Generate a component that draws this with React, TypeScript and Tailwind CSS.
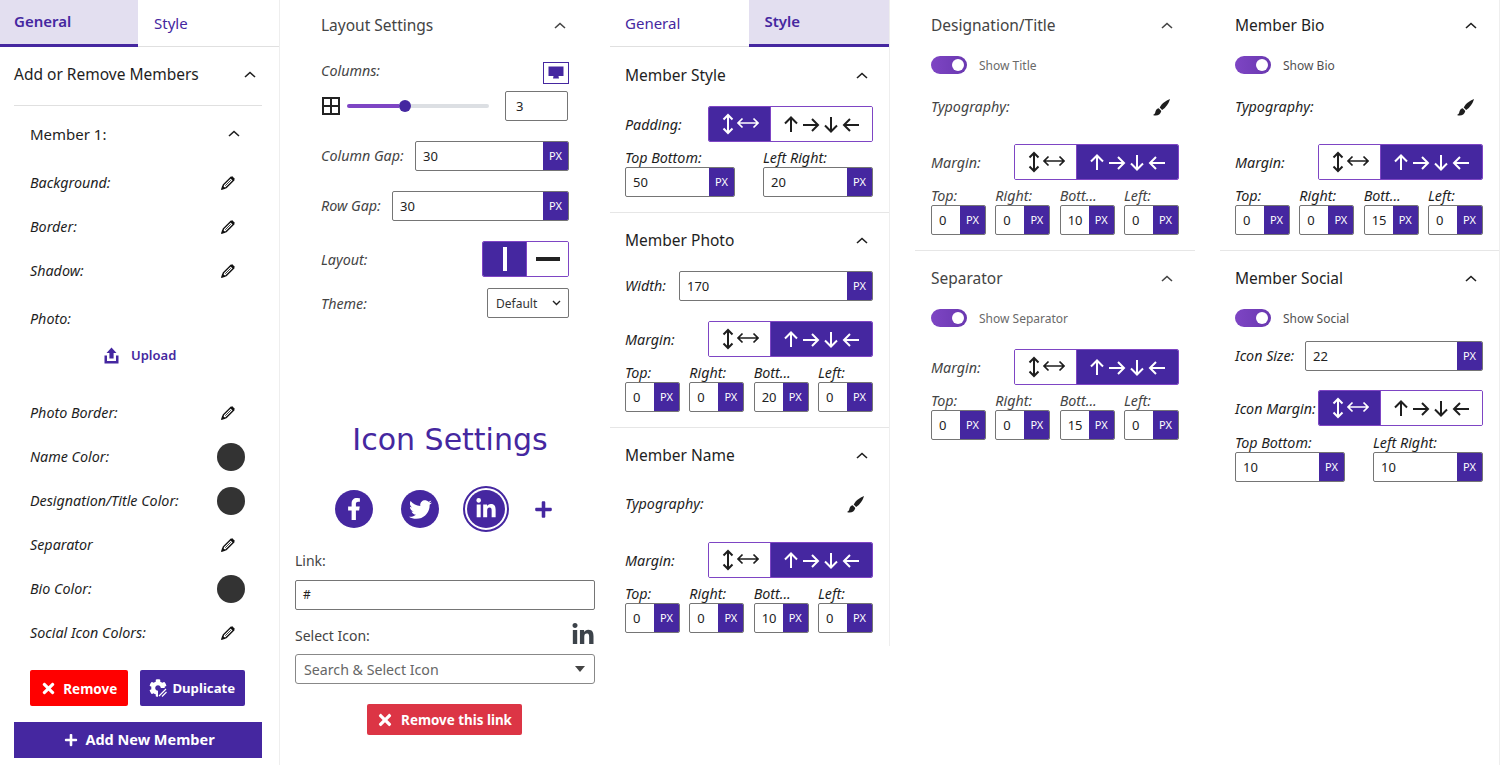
import React from 'react';
import { FaFacebookF, FaTwitter, FaLinkedinIn, FaTimes, FaPlus, FaCog } from 'react-icons/fa';

const Chevron = () => (
  <svg width="12" height="7" viewBox="0 0 12 7" fill="none" stroke="currentColor" strokeWidth="1.6">
    <path d="M1 6 L6 1.5 L11 6" />
  </svg>
);

const Pencil = () => (
  <svg width="16" height="16" viewBox="0 0 16 16">
    <path d="M2.5 13.5 L3.4 9.8 L10.8 2.4 L13.6 5.2 L6.2 12.6 Z" fill="#fff" stroke="#111" strokeWidth="1.4" />
    <path d="M1 15 L2.2 10.4 L5.6 13.8 Z" fill="#111" />
    <path d="M10.2 3 L12 1 L15 4 L13 5.8 Z" fill="#111" />
    <path d="M5.2 10.8 L10.8 5.2" stroke="#111" strokeWidth="0.8" />
  </svg>
);

const Brush = () => (
  <svg width="17" height="17" viewBox="0 0 16 16" fill="#1e1e1e" className="mr-[9px]">
    <path d="M16 0 C12 1.5 8 4.5 6.3 8 L8.6 10.3 C12 8.2 15 4 16 0 Z" />
    <path d="M5.4 8.8 C3.2 9 2.5 10.8 2.1 12.8 C1.9 13.9 1 14.6 0 15 C3 16.4 7 15.2 7.8 11.3 Z" />
  </svg>
);

const UploadIcon = () => (
  <svg width="15" height="17" viewBox="0 0 15 17" fill="#4527a0">
    <path d="M7.5 0.5 L12.5 6 L9.6 6 L9.6 11.5 L5.4 11.5 L5.4 6 L2.5 6 Z" />
    <path d="M0.5 8.5 H3 V14 H12 V8.5 H14.5 V16.5 H0.5 Z" />
  </svg>
);

const GridIcon = () => (
  <svg width="18" height="18" viewBox="0 0 18 18" fill="none" stroke="#222" strokeWidth="2">
    <rect x="1" y="1" width="16" height="16" />
    <path d="M9 1 V17 M1 9 H17" />
  </svg>
);

const MonitorIcon = () => (
  <svg width="16" height="14" viewBox="0 0 16 14" fill="#4527a0">
    <path d="M0.5 0.5 H15.5 V10 H0.5 Z" />
    <path d="M5.5 10 H10.5 L11 12.5 H5 Z" />
  </svg>
);

const PairIcon = () => (
  <svg width="38" height="22" viewBox="0 0 38 22" fill="none" stroke="currentColor" strokeWidth="2" className="shrink-0">
    <path d="M7 2 V20 M2.5 6.5 L7 2 L11.5 6.5 M2.5 15.5 L7 20 L11.5 15.5" />
    <path d="M17 10 H37 M21.5 5.5 L17 10 L21.5 14.5 M32.5 5.5 L37 10 L32.5 14.5" strokeWidth="1.7" />
  </svg>
);

const SidesIcon = () => (
  <svg width="76" height="17" viewBox="0 0 76 17" fill="none" stroke="currentColor" strokeWidth="2" className="shrink-0">
    <path d="M7 16 V2 M1 7.5 L7 1.5 L13 7.5" />
    <path d="M19 9 H34 M28 3 L34 9 L28 15" />
    <path d="M47 1 V15 M41 9.5 L47 15.5 L53 9.5" />
    <path d="M75 9 H60 M66 3 L60 9 L66 15" />
  </svg>
);

const PxInput = ({ value, className }: { value: string; className: string }) => (
  <div className={`flex h-[30px] overflow-hidden rounded-[2px] border border-[#757575] bg-white ${className}`}>
    <div className="flex-1 pl-[7px] text-[13px] leading-[28px] text-[#222]">{value}</div>
    <div className="flex w-[25px] items-center justify-center bg-[#4527a0] text-[11px] text-white">PX</div>
  </div>
);

// two part toggle between linked values and the four sides
const Segment = ({ active }: { active: 'pair' | 'sides' }) => (
  <div className="flex h-[36px] w-[165px] shrink-0 overflow-hidden rounded-[2px] border border-[#7e45c4]">
    <div className={`flex w-[61px] items-center justify-center ${active === 'pair' ? 'bg-[#4527a0] text-white' : 'bg-white text-[#1e1e1e]'}`}>
      <PairIcon />
    </div>
    <div className={`flex flex-1 items-center justify-center border-l border-[#7e45c4] ${active === 'sides' ? 'bg-[#4527a0] text-white' : 'bg-white text-[#1e1e1e]'}`}>
      <SidesIcon />
    </div>
  </div>
);

const Label = ({ children, className = '' }: { children: React.ReactNode; className?: string }) => (
  <span className={`inline-block text-[14.3px] italic ${className}`}>{children}</span>
);

const Header = ({ title, className, size = 'text-[15.5px]', chevron = 'pr-[3px]' }: { title: string; className: string; size?: string; chevron?: string }) => (
  <div className={`flex items-center justify-between ${className}`}>
    <span className={`pt-[2px] ${size}`}>{title}</span>
    <span className={chevron}>
      <Chevron />
    </span>
  </div>
);

const Tabs = ({ active }: { active: 'General' | 'Style' }) => (
  <div className="flex h-[47px] border-b border-[#e0e0e0] text-[15px] text-[#4527a0]">
    {(['General', 'Style'] as const).map((t) =>
      t === active ? (
        <div key={t} className={`flex h-[47px] ${t === 'General' ? 'w-[138px] pl-[14px]' : 'w-[141px] pl-[16px]'} items-center border-b-[3px] border-[#4527a0] bg-[#e3dff0] pb-[2px] font-semibold`}>
          {t}
        </div>
      ) : (
        <div key={t} className={`flex items-center ${t === 'General' ? 'w-[139px] pl-[15px]' : 'w-[141px] pl-[16px]'}`}>
          {t}
        </div>
      ),
    )}
  </div>
);

const FourInputs = ({ bottom }: { bottom: string }) => (
  <>
    <div className="flex h-[25px] items-end justify-between leading-[18px]">
      <span className="w-[55px]"><Label>Top:</Label></span>
      <span className="w-[55px]"><Label>Right:</Label></span>
      <span className="w-[55px]"><Label>Bott...</Label></span>
      <span className="w-[55px]"><Label>Left:</Label></span>
    </div>
    <div className="flex justify-between">
      <PxInput value="0" className="w-[55px]" />
      <PxInput value="0" className="w-[55px]" />
      <PxInput value={bottom} className="w-[55px]" />
      <PxInput value="0" className="w-[55px]" />
    </div>
  </>
);

const MarginRow = ({ className = '' }: { className?: string }) => (
  <div className={`flex items-center justify-between ${className}`}>
    <Label className="pt-[2px]">Margin:</Label>
    <Segment active="sides" />
  </div>
);

const TwoInputs = ({ a, b, className = 'h-[25px]' }: { a: string; b: string; className?: string }) => (
  <>
    <div className={`flex items-end leading-[18px] ${className}`}>
      <span className="w-[138px]"><Label>Top Bottom:</Label></span>
      <Label>Left Right:</Label>
    </div>
    <div className="flex justify-between">
      <PxInput value={a} className="w-[110px]" />
      <PxInput value={b} className="w-[110px]" />
    </div>
  </>
);

const Toggle = ({ label, className }: { label: string; className: string }) => (
  <div className={`flex items-center ${className}`}>
    <div className="flex h-[18px] w-[36px] items-center justify-end rounded-full bg-gradient-to-r from-[#7e45c4] to-[#6a38b0] pr-[3px]">
      <div className="h-[12px] w-[12px] rounded-full bg-white" />
    </div>
    <span className="ml-[12px] pt-[2px] text-[12px] opacity-80">{label}</span>
  </div>
);

const Typography = ({ className }: { className: string }) => (
  <div className={`flex items-center justify-between ${className}`}>
    <Label>Typography:</Label>
    <Brush />
  </div>
);

const ColorRow = ({ label, dot, className = '' }: { label: string; dot?: boolean; className?: string }) => (
  <div className={`flex h-[44px] items-center justify-between ${className}`}>
    <Label>{label}</Label>
    {dot ? (
      <div className="h-[28px] w-[28px] rounded-full bg-[#333]" />
    ) : (
      <div className="flex w-[28px] justify-start pl-[3px]">
        <Pencil />
      </div>
    )}
  </div>
);

const SocialDot = ({ children }: { children: React.ReactNode }) => (
  <div className="flex h-[38px] w-[38px] items-center justify-center rounded-full bg-[#4527a0] text-white">{children}</div>
);

export default function App() {
  return (
    <div className="flex h-[765px] w-[1500px] overflow-hidden bg-white font-['Noto_Sans',sans-serif]">
      {/* General tab */}
      <div className="h-[765px] w-[280px] shrink-0 border-r border-[#eeeeee] text-[#1e1e1e]">
        <Tabs active="General" />
        <div className="w-[262px] pl-[14px]">
          <Header title="Add or Remove Members" className="h-[58px] pb-[4px] pr-[3px]" />
          <div className="h-px bg-[#e0e0e0]" />
          <div className="w-[231px] pl-[16px]">
            <Header title="Member 1:" size="text-[15px]" className="h-[55px] pr-[3px]" chevron="pr-[2px]" />
            <ColorRow label="Background:" />
            <ColorRow label="Border:" />
            <ColorRow label="Shadow:" />
            <ColorRow label="Photo:" className="mt-[4px] [&>div]:hidden" />
            <div className="flex h-[28px] items-center pl-[74px] text-[13px] font-semibold text-[#4527a0]">
              <UploadIcon />
              <span className="ml-[12px] pt-[1px]">Upload</span>
            </div>
            <ColorRow label="Photo Border:" className="mt-[22px]" />
            <ColorRow label="Name Color:" dot />
            <ColorRow label="Designation/Title Color:" dot />
            <ColorRow label="Separator" />
            <ColorRow label="Bio Color:" dot />
            <ColorRow label="Social Icon Colors:" />
            <div className="mt-[15px] flex gap-[12px] text-[13.5px] font-bold text-white">
              <div className="flex h-[36px] w-[98px] items-center justify-center gap-[6px] rounded-[2px] bg-[#ff0000]">
                <FaTimes size={17} />
                <span className="pt-[2px]">Remove</span>
              </div>
              <div className="flex h-[36px] w-[106px] items-center justify-center gap-[5px] rounded-[2px] bg-[#4527a0] text-[13.2px]">
                <div className="relative">
                  <FaCog size={18} />
                  <svg width="9" height="9" viewBox="0 0 9 9" className="absolute bottom-0 right-0" stroke="#fff" strokeWidth="1.2">
                    <rect width="9" height="9" fill="#4527a0" stroke="none" />
                    <path d="M1 8 L8 1 M4 8.5 L8.5 4" />
                  </svg>
                </div>
                <span className="pt-[2px]">Duplicate</span>
              </div>
            </div>
          </div>
          <div className="mt-[16px] flex h-[36px] w-[248px] items-center justify-center gap-[7px] bg-[#4527a0] pl-[3px] text-[14.5px] font-bold text-white">
            <FaPlus size={14} />
            Add New Member
          </div>
        </div>
      </div>

      {/* Layout and icon settings */}
      <div className="h-[765px] w-[330px] shrink-0 text-[#444]">
        <div className="pl-[41px] pr-[41px]">
          <Header title="Layout Settings" className="h-[50px]" />
          <div className="mt-[12px] flex h-[22px] items-center justify-between">
            <Label className="pb-[4px]">Columns:</Label>
            <div className="flex h-[22px] w-[26px] items-center justify-center border border-[#4527a0]">
              <MonitorIcon />
            </div>
          </div>
          <div className="mt-[7px] flex h-[30px] items-center">
            <div className="ml-[1px]"><GridIcon /></div>
            <div className="ml-[7px] flex w-[142px] items-center">
              <div className="h-[4px] w-[52px] rounded-l-full bg-[#7e45c4]" />
              <div className="h-[12px] w-[12px] rounded-full bg-[#4527a0]" />
              <div className="h-[4px] flex-1 rounded-r-full bg-[#dcdfe3]" />
            </div>
            <div className="ml-[16px] h-[30px] w-[63px] rounded-[2px] border border-[#757575] pl-[10px] text-[13px] leading-[28px] text-[#222]">3</div>
          </div>
          <div className="mt-[20px] flex items-center justify-between">
            <Label>Column Gap:</Label>
            <PxInput value="30" className="w-[154px]" />
          </div>
          <div className="mt-[20px] flex items-center justify-between">
            <Label>Row Gap:</Label>
            <PxInput value="30" className="w-[177px]" />
          </div>
          <div className="mt-[20px] flex items-center justify-between">
            <Label className="pt-[2px]">Layout:</Label>
            <div className="flex h-[36px] w-[87px] overflow-hidden rounded-[2px] border border-[#7e45c4]">
              <div className="flex w-[43px] items-center justify-center bg-[#4527a0]">
                <div className="h-[24px] w-[4px] bg-white" />
              </div>
              <div className="flex flex-1 items-center justify-center border-l border-[#7e45c4] bg-white">
                <div className="h-[4px] w-[24px] bg-[#222]" />
              </div>
            </div>
          </div>
          <div className="mt-[11px] flex items-center justify-between">
            <Label className="pt-[2px]">Theme:</Label>
            <div className="flex h-[30px] w-[82px] items-center justify-between rounded-[2px] border border-[#757575] pl-[8px] pr-[7px] text-[12px] text-[#333]">
              <span className="pt-[2px]">Default</span>
              <svg width="9" height="6" viewBox="0 0 9 6" fill="none" stroke="#222" strokeWidth="1.4"><path d="M1 1 L4.5 4.5 L8 1" /></svg>
            </div>
          </div>
        </div>
        <div className="mt-[100px] ml-[15px] w-[300px]">
          <div className="flex h-[44px] items-center justify-center pb-[2px] pl-[10px] font-['DejaVu_Sans',sans-serif] text-[30px] text-[#4527a0]">Icon Settings</div>
          <div className="mt-[24px] flex h-[46px] items-center pl-[40px]">
            <SocialDot><FaFacebookF size={22} /></SocialDot>
            <div className="ml-[28px]"><SocialDot><FaTwitter size={23} /></SocialDot></div>
            <div className="ml-[24px] flex h-[46px] w-[46px] items-center justify-center rounded-full border-2 border-[#4527a0]">
              <SocialDot><FaLinkedinIn size={22} /></SocialDot>
            </div>
            <FaPlus size={19} className="ml-[25px] text-[#4527a0]" />
          </div>
          <div className="mt-[20px] h-[18px] text-[14px] leading-[18px]">Link:</div>
          <div className="mt-[10px] h-[30px] rounded-[2px] border border-[#757575] pl-[7px] text-[12px] leading-[28px] text-[#222]">#</div>
          <div className="mt-[14px] flex h-[22px] items-center justify-between text-[14px]">
            Select Icon:
            <FaLinkedinIn size={24} className="text-[#3c434a]" />
          </div>
          <div className="mt-[8px] flex h-[30px] items-center justify-between rounded-[3px] border border-[#888] pl-[8px] pr-[9px] text-[14.2px] text-[#666]">
            <span className="pt-[2px]">Search &amp; Select Icon</span>
            <div className="h-0 w-0 border-x-[5px] border-t-[6px] border-x-transparent border-t-[#444]" />
          </div>
          <div className="mt-[20px] flex justify-center pr-[2px]">
            <div className="flex h-[31px] w-[155px] items-center justify-center gap-[7px] rounded-[2px] bg-[#dc3545] text-[13.4px] font-bold text-white">
              <FaTimes size={18} />
              <span className="pt-[2px]">Remove this link</span>
            </div>
          </div>
        </div>
      </div>

      {/* Style tab */}
      <div className="h-[646px] w-[280px] shrink-0 border-r border-[#eeeeee] text-[#1e1e1e]">
        <Tabs active="Style" />
        <div className="pl-[15px] pr-[16px]">
          <Header title="Member Style" className="h-[56px] pr-[2px]" />
          <div className="mt-[3px] flex items-center justify-between">
            <Label className="pt-[2px]">Padding:</Label>
            <Segment active="pair" />
          </div>
          <TwoInputs a="50" b="20" />
        </div>
        <div className="mt-[15px] h-px bg-[#e6e6e6]" />
        <div className="pl-[15px] pr-[16px]">
          <Header title="Member Photo" className="h-[54px] pr-[2px]" />
          <div className="mt-[4px] flex items-center justify-between">
            <Label>Width:</Label>
            <PxInput value="170" className="w-[194px]" />
          </div>
          <MarginRow className="mt-[20px]" />
          <FourInputs bottom="20" />
        </div>
        <div className="mt-[15px] h-px bg-[#e6e6e6]" />
        <div className="pl-[15px] pr-[16px]">
          <Header title="Member Name" className="h-[54px] pr-[2px]" />
          <Typography className="h-[44px]" />
          <MarginRow className="mt-[16px]" />
          <FourInputs bottom="10" />
        </div>
      </div>

      {/* Designation and separator */}
      <div className="ml-[25px] h-[765px] w-[280px] shrink-0 text-[#444]">
        <div className="pl-[16px] pr-[16px]">
          <Header title="Designation/Title" className="h-[50px] pr-[3px]" />
          <Toggle label="Show Title" className="h-[30px]" />
          <Typography className="h-[54px]" />
          <MarginRow className="mt-[10px]" />
          <FourInputs bottom="10" />
        </div>
        <div className="mt-[15px] h-px bg-[#e6e6e6]" />
        <div className="pl-[16px] pr-[16px]">
          <Header title="Separator" className="h-[54px] pr-[3px]" />
          <Toggle label="Show Separator" className="h-[26px]" />
          <MarginRow className="mt-[18px]" />
          <FourInputs bottom="15" />
        </div>
      </div>

      {/* Bio and social */}
      <div className="ml-[25px] h-[765px] w-[280px] shrink-0 border-r border-[#eeeeee] text-[#1e1e1e]">
        <div className="pl-[15px] pr-[16px]">
          <Header title="Member Bio" className="h-[50px] pr-[3px]" />
          <Toggle label="Show Bio" className="h-[30px]" />
          <Typography className="h-[54px]" />
          <MarginRow className="mt-[10px]" />
          <FourInputs bottom="15" />
        </div>
        <div className="mt-[15px] h-px bg-[#e6e6e6]" />
        <div className="pl-[15px] pr-[16px]">
          <Header title="Member Social" className="h-[54px] pr-[3px]" />
          <Toggle label="Show Social" className="h-[26px]" />
          <div className="mt-[10px] flex items-center justify-between">
            <Label>Icon Size:</Label>
            <PxInput value="22" className="w-[178px]" />
          </div>
          <div className="mt-[19px] flex items-center justify-between">
            <Label className="pt-[2px]">Icon Margin:</Label>
            <Segment active="pair" />
          </div>
          <TwoInputs a="10" b="10" className="h-[26px]" />
        </div>
      </div>
    </div>
  );
}
